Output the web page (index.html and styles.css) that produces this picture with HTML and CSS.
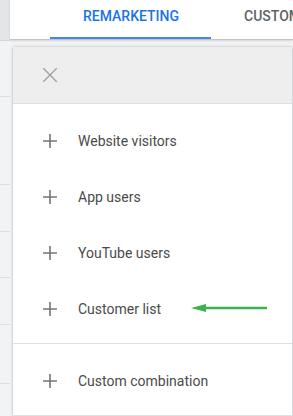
FILE: index.html
```
<!DOCTYPE html>
<html lang="en">
<head>
  <meta charset="utf-8">
  <title>Audience sources</title>
  <link rel="stylesheet" href="styles.css">
</head>
<body>
  <div class="page">
    <!-- underlying table, cut off at the left -->
    <div class="sideStrip">
      <div class="stripHead"></div>
      <div class="stripRow" style="height: 56px"></div>
      <div class="stripRow" style="height: 88px"></div>
      <div class="stripRow" style="height: 47px"></div>
      <div class="stripRow" style="height: 46px"></div>
      <div class="stripRow" style="height: 47px"></div>
      <div class="stripRow" style="height: 59px"></div>
    </div>

    <div class="main">
      <div class="tabBar">
        <div class="tab active">Remarketing</div>
        <div class="tab">Custom audiences</div>
      </div>

      <div class="content">
        <div class="panel">
          <div class="panelHeader">
            <button class="iconButton" title="Close">
              <svg width="24" height="24" viewBox="0 0 24 24">
                <path d="M5.3 5.3L18.7 18.7M18.7 5.3L5.3 18.7" stroke="#9e9e9e" stroke-width="1.3" fill="none"/>
              </svg>
            </button>
          </div>

          <div class="group">
            <div class="item">
              <svg class="addIcon" width="24" height="24" viewBox="0 0 24 24">
                <path d="M12 5v14M5 12h14" stroke="#757575" stroke-width="1.6" fill="none"/>
              </svg>
              <span>Website visitors</span>
            </div>
            <div class="item">
              <svg class="addIcon" width="24" height="24" viewBox="0 0 24 24">
                <path d="M12 5v14M5 12h14" stroke="#757575" stroke-width="1.6" fill="none"/>
              </svg>
              <span>App users</span>
            </div>
            <div class="item">
              <svg class="addIcon" width="24" height="24" viewBox="0 0 24 24">
                <path d="M12 5v14M5 12h14" stroke="#757575" stroke-width="1.6" fill="none"/>
              </svg>
              <span>YouTube users</span>
            </div>
            <div class="item">
              <svg class="addIcon" width="24" height="24" viewBox="0 0 24 24">
                <path d="M12 5v14M5 12h14" stroke="#757575" stroke-width="1.6" fill="none"/>
              </svg>
              <span>Customer list</span>
              <!-- annotation arrow -->
              <svg class="pointer" width="78" height="10" viewBox="0 0 78 10">
                <path d="M14 5H76" stroke="#3cb34a" stroke-width="2.4" fill="none"/>
                <path d="M0 5L15 1V9Z" fill="#3cb34a"/>
              </svg>
            </div>
          </div>

          <div class="group">
            <div class="item">
              <svg class="addIcon" width="24" height="24" viewBox="0 0 24 24">
                <path d="M12 5v14M5 12h14" stroke="#757575" stroke-width="1.6" fill="none"/>
              </svg>
              <span>Custom combination</span>
            </div>
          </div>
        </div>
      </div>
    </div>
  </div>
</body>
</html>
```

FILE: styles.css
```
* {
  padding: 0;
  margin: 0;
  box-sizing: border-box;
}

html,
body {
  height: 100%;
  width: 100%;
  overflow: hidden;
  font-family: Roboto, "Liberation Sans", Arial, sans-serif;
  background-color: #f1f3f4;
}

.page {
  display: flex;
  height: 100%;
}

.sideStrip {
  width: 10px;
  flex-shrink: 0;
  display: flex;
  flex-direction: column;
}

.stripHead {
  height: 41px;
  background-color: #e4e5e6;
  border-bottom: 1px solid #d5d6d7;
}

.stripRow {
  flex-shrink: 0;
  border-bottom: 1px solid #dcdfe2;
}

.main {
  flex: 1;
  min-width: 0;
  display: flex;
  flex-direction: column;
}

.tabBar {
  position: relative;
  z-index: 2;
  display: flex;
  height: 41px;
  padding-left: 40px;
  background-color: #fff;
  border-bottom: 1px solid #c4c4c4;
  box-shadow: 0 1px 2px rgba(0, 0, 0, 0.12);
  white-space: nowrap;
  overflow: hidden;
}

.tab {
  flex-shrink: 0;
  height: 40px;
  padding: 8px 32px 0 33px;
  line-height: 16px;
  font-size: 14px;
  font-weight: 500;
  text-transform: uppercase;
  color: #5f6368;
  border-bottom: 3px solid transparent;
}

.tab.active {
  color: #1a73e8;
  border-bottom-color: #4285f4;
}

.content {
  flex: 1;
  padding: 7px 1px 0 3px;
}

.panel {
  height: 100%;
  background-color: #fff;
  box-shadow: 0 0 3px rgba(0, 0, 0, 0.22), 0 1px 2px rgba(0, 0, 0, 0.1);
}

.panelHeader {
  display: flex;
  align-items: center;
  height: 57px;
  padding-left: 25px;
  background-color: #eeeeee;
  border-bottom: 1px solid #e0e0e0;
}

.iconButton {
  display: flex;
  background: transparent;
  border: none;
  cursor: pointer;
}

.group {
  padding: 9px 0 6px;
  border-bottom: 1px solid #e0e0e0;
}

.item {
  position: relative;
  display: flex;
  align-items: center;
  height: 56px;
  padding-left: 25px;
  font-size: 14px;
  color: #4a4a4a;
}

.addIcon {
  margin-right: 16px;
  flex-shrink: 0;
}

.pointer {
  position: absolute;
  left: 178px;
  top: 22px;
}
```
